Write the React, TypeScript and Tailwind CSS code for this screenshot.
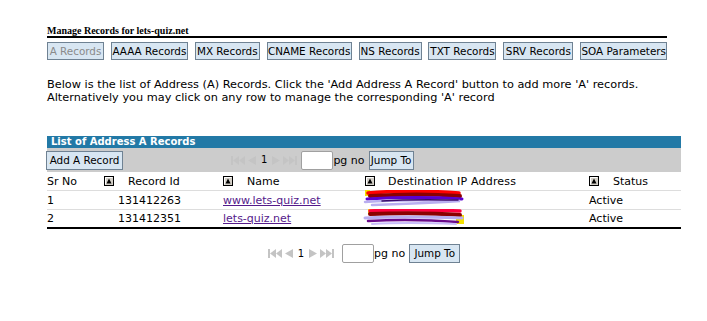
import React from "react";

const SortIcon = () => (
  <svg width="10" height="10" viewBox="0 0 10 10" className="shrink-0">
    <rect x="0.5" y="0.5" width="9" height="9" fill="#d4d0c8" stroke="#000" />
    <line x1="1.5" y1="1.5" x2="8.5" y2="1.5" stroke="#fff" />
    <line x1="1.5" y1="1.5" x2="1.5" y2="8.5" stroke="#fff" />
    <polygon points="5,2.5 7.5,7.5 2.5,7.5" fill="#000" />
  </svg>
);

const Arrows = ({ dir }: { dir: "l" | "r" }) => {
  const flip = dir === "r" ? "scale(-1,1) translate(-15,0)" : undefined;
  return (
    <svg width="15" height="9" viewBox="0 0 15 9">
      <g transform={flip} fill="#c4c4c4">
        <rect x="0" y="0" width="2" height="9" />
        <polygon points="2,4.5 8,0 8,9" />
        <polygon points="8,4.5 14,0 14,9" />
      </g>
    </svg>
  );
};

const Single = ({ dir }: { dir: "l" | "r" }) => (
  <svg width="9" height="9" viewBox="0 0 9 9">
    {dir === "l" ? (
      <polygon points="0,4.5 8,0 8,9" fill="#c4c4c4" />
    ) : (
      <polygon points="9,4.5 1,0 1,9" fill="#c4c4c4" />
    )}
  </svg>
);

const btn =
  "h-[18px] flex items-center justify-center border border-[#6f8293] bg-[#d8e6f2] leading-none text-[#000] whitespace-nowrap";

const Pager = ({ wide }: { wide?: boolean }) => (
  <div className="flex items-center">
    <div className="flex items-center gap-[2px]">
      <Arrows dir="l" />
      <Single dir="l" />
      <span className="text-[10px] leading-none mx-[2px] text-black">1</span>
      <Single dir="r" />
      <Arrows dir="r" />
    </div>
    <div
      className={
        "w-[32px] h-[19px] bg-white border border-[#a0a0a0] rounded-[2px] " +
        (wide ? "ml-[8px]" : "ml-[4px]")
      }
    />
    <span className="text-[11px] leading-none">pg no</span>
    <div className={btn + " ml-[4px] h-[19px] text-[10.4px] " + (wide ? "w-[51px]" : "w-[45px]")}>Jump To</div>
  </div>
);

const Scribble = ({ seed }: { seed: number }) => (
  <svg width="110" height="20" viewBox="0 0 110 20" className="absolute left-0 top-[-1px]">
    {seed === 1 ? (
      <g fill="none" strokeLinecap="round">
        <rect x="3" y="0" width="5" height="6" fill="#f5e100" />
        <path d="M6 3 C40 0 70 1 97 3" stroke="#ff0000" strokeWidth="3.5" />
        <path d="M8 6 C40 4 70 4 98 6" stroke="#8b0000" strokeWidth="4" />
        <path d="M5 9 C40 7 70 7 100 9" stroke="#5b00d0" strokeWidth="3" />
        <path d="M3 12 C40 9 70 10 98 11 C70 13 40 14 10 15" stroke="#b9aef0" strokeWidth="2.5" />
        <path d="M20 11 C50 9 80 10 96 10" stroke="#3a0a6a" strokeWidth="1.5" />
      </g>
    ) : (
      <g fill="none" strokeLinecap="round">
        <rect x="94" y="6" width="8" height="9" fill="#f5e100" />
        <rect x="6" y="0" width="6" height="5" fill="#f5e100" />
        <path d="M8 2 C40 0 70 1 98 2" stroke="#ff0040" strokeWidth="3.5" />
        <path d="M8 5 C40 4 70 4 98 6" stroke="#8b0000" strokeWidth="4" />
        <path d="M3 9 C40 7 70 8 100 9" stroke="#b9aef0" strokeWidth="3" />
        <path d="M6 12 C40 10 70 11 96 13" stroke="#6a0a8a" strokeWidth="2.5" />
        <path d="M10 15 C40 13 70 14 94 15" stroke="#c9befa" strokeWidth="2" />
      </g>
    )}
  </svg>
);

export default function App() {
  const tabs = [
    { t: "A Records", w: "w-[57px]" },
    { t: "AAAA Records", w: "w-[77px]" },
    { t: "MX Records", w: "w-[65px]" },
    { t: "CNAME Records", w: "w-[85px]" },
    { t: "NS Records", w: "w-[63px]" },
    { t: "TXT Records", w: "w-[68px]" },
    { t: "SRV Records", w: "w-[70px]" },
    { t: "SOA Parameters", w: "w-[87px]" },
  ];
  const rows = [
    { n: "1", id: "131412263", name: "www.lets-quiz.net" },
    { n: "2", id: "131412351", name: "lets-quiz.net" },
  ];
  return (
    <div className="w-[707px] h-[321px] bg-white overflow-hidden font-['DejaVu_Sans',Verdana,sans-serif] text-black">
      <div className="pl-[47px] pt-[25px]">
        <div className="w-[620px] border-b-2 border-black font-['Liberation_Serif',serif] font-bold text-[10px] leading-[11px]">
          Manage Records for lets-quiz.net
        </div>
        <div className="flex gap-[6.9px] mt-[4px] text-[10.4px]">
          {tabs.map((t, i) => (
            <div key={t.t} className={btn + " " + t.w + (i === 0 ? " text-[#8a8a8a]" : "")}>
              {t.t}
            </div>
          ))}
        </div>
        <div className="mt-[18px] text-[11.3px] leading-[13px]">
          <div>
            Below is the list of Address (A) Records. Click the 'Add Address A Record' button to add more 'A' records.
          </div>
          <div>Alternatively you may click on any row to manage the corresponding 'A' record</div>
        </div>

        <div className="w-[634px] mt-[32px]">
          <div className="h-[12px] bg-[#2279a6] text-white font-bold text-[10px] leading-[12px] pl-[4px]">
            List of Address A Records
          </div>
          <div className="h-[24px] bg-[#cccccc] flex items-center">
            <div className={btn + " h-[19px] w-[77px] ml-[-1px] text-[10.4px]"}>Add A Record</div>
            <div className="ml-[108px]">
              <Pager />
            </div>
          </div>
          <div className="grid grid-cols-[56px_120px_142px_224px_92px] h-[19px] items-center text-[11px] leading-none border-b border-[#dddddd]">
            <div>Sr No</div>
            <div className="flex items-center gap-[14px] pl-[1px]">
              <SortIcon />
              <span>Record Id</span>
            </div>
            <div className="flex items-center gap-[14px]">
              <SortIcon />
              <span>Name</span>
            </div>
            <div className="flex items-center gap-[13px]">
              <SortIcon />
              <span className="tracking-[0.2px]">Destination IP Address</span>
            </div>
            <div className="flex items-center gap-[14px]">
              <SortIcon />
              <span>Status</span>
            </div>
          </div>
          {rows.map((r, i) => (
            <div
              key={r.n}
              className={
                "grid grid-cols-[56px_120px_142px_224px_92px] h-[19px] items-center text-[11px] leading-none " +
                (i === rows.length - 1 ? "border-b-2 border-black" : "border-b border-[#dddddd]")
              }
            >
              <div>{r.n}</div>
              <div className="pl-[15px]">{r.id}</div>
              <div>
                <span className="text-[#551a8b] underline">{r.name}</span>
              </div>
              <div className="relative h-full">
                <div className="relative ml-[-3px] h-full">
                  <Scribble seed={i + 1} />
                </div>
              </div>
              <div>Active</div>
            </div>
          ))}
          <div className="flex justify-center mt-[15px]">
            <Pager wide />
          </div>
        </div>
      </div>
    </div>
  );
}
